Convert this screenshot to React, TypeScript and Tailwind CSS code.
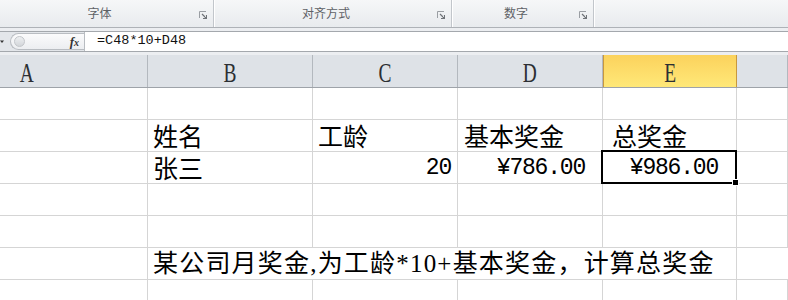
import React from "react";

const cjk = '"Noto Sans CJK SC", "Noto Sans", sans-serif';
const serifCjk = '"Liberation Serif", "Noto Sans CJK SC", serif';
const mono = '"Liberation Mono", "DejaVu Sans Mono", monospace';

function Launcher() {
  return (
    <svg width="8" height="8" viewBox="0 0 8 8" className="shrink-0">
      <path d="M0.5 7V0.5H7" fill="none" stroke="#9a9ea3" strokeWidth="1" />
      <path d="M3 3L7.5 7.5M7.5 4V7.5H4" fill="none" stroke="#6f7378" strokeWidth="1.2" />
    </svg>
  );
}

function Group({ label, width }: { label: string; width: string }) {
  return (
    <div className={`${width} h-full flex items-end shrink-0`}>
      <div className="flex-1 text-center text-[12px] text-[#5e6166] pb-[5px]" style={{ fontFamily: cjk }}>
        {label}
      </div>
      <div className="pb-[8px] pr-[6px]">
        <Launcher />
      </div>
      <div className="w-[1px] h-full bg-[#c2c6cb]" />
      <div className="w-[1px] h-full bg-[#ffffff]" />
    </div>
  );
}

const cols = [
  { key: "A", w: "w-[148px]" },
  { key: "B", w: "w-[165px]" },
  { key: "C", w: "w-[145px]" },
  { key: "D", w: "w-[145px]" },
  { key: "E", w: "w-[134px]" },
  { key: "F", w: "flex-1" },
];

type Cell = { text?: string; align?: "left" | "right"; pad?: string; num?: boolean };

const rows: Cell[][] = [
  [{}, {}, {}, {}, {}, {}],
  [{}, { text: "姓名", pad: "pl-[5px]" }, { text: "工龄", pad: "pl-[5px]" }, { text: "基本奖金", pad: "pl-[6px]" }, { text: "总奖金", pad: "pl-[9px]" }, {}],
  [{}, { text: "张三", pad: "pl-[5px]" }, { text: "20", align: "right", pad: "pr-[6px]", num: true }, { text: "¥786.00", align: "right", pad: "pr-[17px]", num: true }, { text: "¥986.00", align: "right", pad: "pr-[18px]", num: true }, {}],
  [{}, {}, {}, {}, {}, {}],
  [{}, {}, {}, {}, {}, {}],
];

export default function App() {
  return (
    <div className="w-[788px] h-[300px] overflow-hidden bg-white select-none">
      {/* ribbon group labels */}
      <div className="h-[28px] flex bg-gradient-to-b from-[#f6f7f8] to-[#e8ebee] border-b border-[#aeb2b7]">
        <Group label="字体" width="w-[215px]" />
        <Group label="对齐方式" width="w-[238px]" />
        <Group label="数字" width="w-[142px]" />
        <div className="flex-1" />
      </div>
      <div className="h-[3px] bg-[#eceef1]" />

      {/* formula bar */}
      <div className="h-[21px] flex border-y border-[#a4a8ad] bg-white">
        <div className="w-[85px] h-full flex items-center bg-[#e3e6ea] border-r border-[#b8bcc1]">
          <svg width="4" height="4" viewBox="0 0 4 4">
            <path d="M0 0.5H4L2 3Z" fill="#333" />
          </svg>
          <div className="ml-[6px] h-[17px] flex-1 rounded-l-full bg-gradient-to-b from-[#fbfbfc] to-[#eceef1] border border-[#b9bdc2] border-r-0 flex items-center">
            <div className="ml-[3px] w-[11px] h-[11px] rounded-full bg-gradient-to-b from-[#eef0f2] to-[#d3d6da] border border-[#c3c6ca]" />
            <div className="flex-1" />
            <span className="mr-[5px] text-[13px] italic font-bold text-[#333] leading-none" style={{ fontFamily: '"Liberation Serif", serif' }}>
              f<span className="text-[10px]">x</span>
            </span>
          </div>
        </div>
        <div className="flex-1 flex items-center pl-[12px] text-[13.5px] text-[#111]" style={{ fontFamily: mono }}>
          =C48*10+D48
        </div>
      </div>
      <div className="h-[3px] bg-[#eceef1]" />

      {/* column headers */}
      <div className="h-[33px] flex bg-[#dee2e7] border-b border-[#9ea3a9]">
        {cols.map((c) => (
          <div
            key={c.key}
            className={`${c.w} h-full flex items-center ${c.key === "A" ? "justify-start pl-[17px]" : "justify-center"} ${
              c.key === "E"
                ? "bg-gradient-to-b from-[#fbd25c] to-[#ffe878] border-x border-[#c8983e]"
                : "border-r border-[#b3b8be]"
            }`}
          >
            {c.key !== "F" && (
              <span
                className="inline-block text-[27px] leading-none text-[#2c2f33] scale-x-[0.72] mt-[4px]"
                style={{ fontFamily: '"Liberation Serif", serif' }}
              >
                {c.key}
              </span>
            )}
          </div>
        ))}
      </div>

      {/* grid */}
      {rows.map((row, ri) => (
        <div key={ri} className="h-[32px] flex">
          {row.map((cell, ci) => (
            <div
              key={ci}
              className={`${cols[ci].w} h-full border-r border-b border-[#d5d5d5] flex items-end relative ${
                cell.align === "right" ? "justify-end" : "justify-start"
              } ${cell.pad ?? ""} ${cell.num ? "pb-[1px]" : "pb-[2px]"}`}
            >
              {cell.text && (
                <span
                  className={cell.num ? "text-[23px] leading-[27px] text-black tracking-[-1.2px]" : "text-[25px] leading-[27px] text-black"}
                  style={{ fontFamily: cell.num ? mono : cjk }}
                >
                  {cell.text}
                </span>
              )}
              {ri === 2 && ci === 4 && (
                <div className="absolute -left-[2px] -top-[2px] -right-[1px] -bottom-[1px] border-[2px] border-black z-10">
                  <div className="absolute -right-[4px] -bottom-[4px] w-[7px] h-[7px] bg-black border border-white" />
                </div>
              )}
            </div>
          ))}
        </div>
      ))}

      {/* note row: text overflows across columns */}
      <div className="h-[32px] flex">
        <div className="w-[148px] h-full border-r border-b border-[#d5d5d5]" />
        <div className="w-[589px] h-full border-r border-b border-[#d5d5d5] flex items-end pb-[2px] pl-[5px]">
          <span className="text-[25px] leading-[27px] text-black whitespace-nowrap tracking-[1.2px]" style={{ fontFamily: serifCjk }}>
            某公司月奖金,为工龄*10+基本奖金，计算总奖金
          </span>
        </div>
        <div className="flex-1 h-full border-b border-[#d5d5d5]" />
      </div>
      <div className="h-[32px] flex">
        {cols.map((c) => (
          <div key={c.key} className={`${c.w} h-full border-r border-b border-[#d5d5d5]`} />
        ))}
      </div>
    </div>
  );
}
